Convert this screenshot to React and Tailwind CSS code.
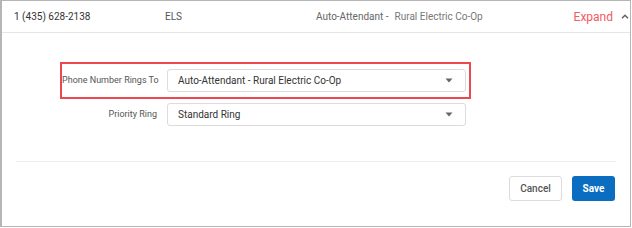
import { useState } from 'react';

function Caret() {
  return (
    <svg width="8" height="5" viewBox="0 0 8 5" className="shrink-0">
      <path d="M0.5 0.5h7L4 4.5z" fill="#666" />
    </svg>
  );
}

function Select({ value }) {
  return (
    <div className="w-[299px] h-[23px] border border-[#dcdcdc] rounded-[3px] bg-white flex items-center justify-between pl-[10px] pr-[12px] text-[10px] text-[#333]">
      <span>{value}</span>
      <Caret />
    </div>
  );
}

export default function App() {
  const [ring] = useState('Standard Ring');

  return (
    <div className="w-[632px] h-[228px] bg-white" style={{ fontFamily: 'Roboto, "Liberation Sans", sans-serif' }}>
      <div className="w-[631px] h-[227px] border border-[#b5b5b5] border-l-2 flex flex-col">
        {/* header row */}
        <div className="h-[32px] border-b border-[#e6e6e6] flex items-center text-[10px] text-[#333] shrink-0">
          <div className="w-[163px] pl-[12px]">1 (435) 628-2138</div>
          <div className="w-[151px] text-[#555]">ELS</div>
          <div className="flex-1 flex gap-[6px] text-[#666]">
            <span>Auto-Attendant -</span>
            <span className="text-[#777]">Rural Electric Co-Op</span>
          </div>
          <div className="flex items-center gap-[8px] pr-[1px]">
            <span className="text-[12px] text-[#f25a5f]">Expand</span>
            <svg width="8" height="5" viewBox="0 0 8 5">
              <path d="M1 4.3L4 1.3l3 3" stroke="#666" strokeWidth="1.6" fill="none" />
            </svg>
          </div>
        </div>

        {/* form */}
        <div className="pt-[29px] pl-[58px]">
          <div className="w-[411px] h-[37px] border-2 border-[#ec4850] flex items-center">
            <div className="w-[95px] text-right text-[9px] text-[#555] whitespace-nowrap">Phone Number Rings To</div>
            <div className="ml-[10px]">
              <Select value="Auto-Attendant - Rural Electric Co-Op" />
            </div>
          </div>
          <div className="flex items-center mt-[4px] pl-[2px]">
            <div className="w-[95px] text-right text-[9px] text-[#555] whitespace-nowrap">Priority Ring</div>
            <div className="ml-[10px]">
              <Select value={ring} />
            </div>
          </div>
        </div>

        {/* footer */}
        <div className="mx-[14px] mt-[35px] border-t border-[#eeeeee]" />
        <div className="flex justify-end gap-[10px] pr-[15px] mt-[14px]">
          <button className="w-[53px] h-[25px] border border-[#dcdcdc] rounded-[3px] bg-white text-[10px] font-medium text-[#555]">
            Cancel
          </button>
          <button className="w-[43px] h-[25px] rounded-[3px] bg-[#0b6dbf] text-[10px] font-bold text-white">
            Save
          </button>
        </div>
      </div>
    </div>
  );
}
